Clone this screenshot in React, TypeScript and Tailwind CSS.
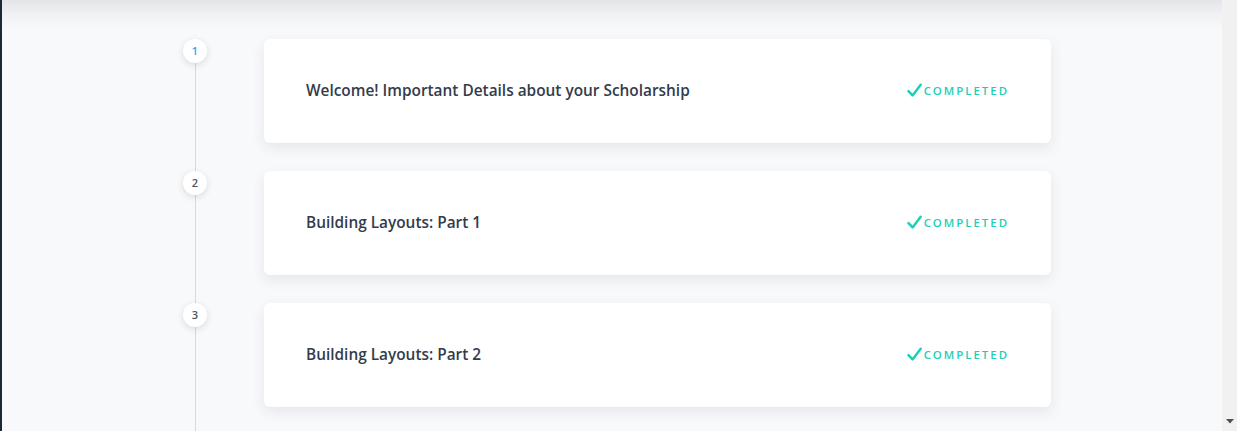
import React from "react";

const items = [
  { n: 1, title: "Welcome! Important Details about your Scholarship", active: true },
  { n: 2, title: "Building Layouts: Part 1", active: false },
  { n: 3, title: "Building Layouts: Part 2", active: false },
];

function Check() {
  return (
    <svg width="15" height="15" viewBox="0 0 14 14" fill="none">
      <path d="M1.4 7.6 L5.2 11.6 L12.8 1.6" stroke="#1dcfb4" strokeWidth="2.3" strokeLinecap="round" strokeLinejoin="round" />
    </svg>
  );
}

export default function App() {
  return (
    <div
      className="flex h-[431px] w-[1237px] overflow-hidden bg-[#f8f9fb]"
      style={{ fontFamily: '"Open Sans", "Noto Sans", sans-serif' }}
    >
      <div className="w-[2px] shrink-0 bg-[#1f2936]" />
      <div className="flex min-w-0 flex-1 flex-col">
        <div className="h-[30px] shrink-0 bg-gradient-to-b from-[#e4e5e8] via-[#f1f2f4] to-[#f8f9fb]" />
        <div className="flex flex-col gap-[28px] pl-[181px] pt-[9px]">
          {items.map((it) => (
            <div key={it.n} className="flex items-start">
              <div className="flex w-[24px] shrink-0 flex-col items-center self-stretch">
                <div
                  className={`z-10 flex h-[24px] w-[24px] shrink-0 items-center justify-center rounded-full bg-white text-[11px] font-semibold shadow-[0_2px_7px_rgba(0,0,0,0.13)] ${
                    it.active ? "text-[#35a2f0]" : "text-[#4a5261]"
                  }`}
                >
                  {it.n}
                </div>
                <div className="mb-[-40px] w-px flex-1 bg-[#d6d9de]" />
              </div>
              <div className="ml-[57px] flex h-[104px] w-[787px] shrink-0 items-center justify-between rounded-[6px] bg-white px-[42px] shadow-[0_5px_14px_rgba(30,40,60,0.09)]">
                <span className="text-[15.4px] font-semibold text-[#333c4a]">{it.title}</span>
                <span className="flex items-center gap-[2px]">
                  <Check />
                  <span className="text-[11.4px] font-semibold tracking-[2px] text-[#1dcfb4]">COMPLETED</span>
                </span>
              </div>
            </div>
          ))}
        </div>
      </div>
      <div className="flex w-[15px] shrink-0 flex-col items-center justify-end bg-[#f1f1f1] pb-[7px]">
        <svg width="8" height="5" viewBox="0 0 8 5">
          <path d="M0 0 L8 0 L4 4.5 Z" fill="#505050" />
        </svg>
      </div>
    </div>
  );
}
